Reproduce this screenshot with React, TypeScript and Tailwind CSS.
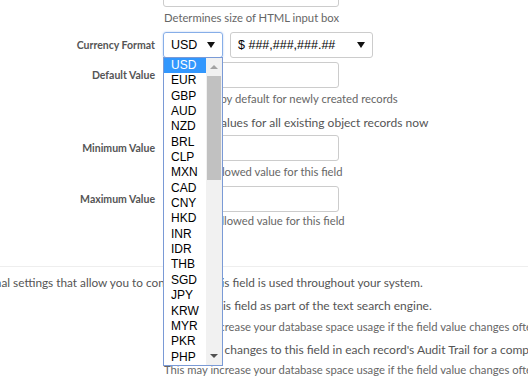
import React from 'react';

const currencies = [
  'USD', 'EUR', 'GBP', 'AUD', 'NZD', 'BRL', 'CLP', 'MXN', 'CAD', 'CNY',
  'HKD', 'INR', 'IDR', 'THB', 'SGD', 'JPY', 'KRW', 'MYR', 'PKR', 'PHP',
];

function Caret() {
  return (
    <svg width="8" height="6" viewBox="0 0 8 6" aria-hidden="true">
      <path d="M0 0h8L4 6z" fill="#111" />
    </svg>
  );
}

function TextBox() {
  return <div className="w-[176px] h-[26px] border border-[#ccc] rounded-[3px] bg-white" />;
}

function Label({ children }: { children: React.ReactNode }) {
  return (
    <div className="w-[155px] shrink-0 text-right text-[10.5px] font-bold text-[#555] leading-4">
      {children}
    </div>
  );
}

function Hint({ children, className = '' }: { children: React.ReactNode; className?: string }) {
  return <div className={`pl-[164px] text-[11.25px] leading-4 text-[#666] whitespace-nowrap ${className}`}>{children}</div>;
}

function CheckLine({
  children,
  className = '',
  gap = 'gap-[5px]',
}: {
  children: React.ReactNode;
  className?: string;
  gap?: string;
}) {
  return (
    <div className={`pl-[164px] flex items-center ${gap} text-[12px] leading-4 text-[#555] whitespace-nowrap ${className}`}>
      <span className="w-[13px] h-[13px] border border-[#999] rounded-[2px] bg-white shrink-0" />
      {children}
    </div>
  );
}

function CurrencyList() {
  return (
    <div className="absolute left-[163px] top-[57px] w-[60px] h-[309px] border border-[#7a9ad6] bg-white flex font-['Liberation_Sans',Arial,sans-serif] text-[12px] text-black">
      <ul className="flex-1 flex flex-col">
        {currencies.map((c, i) => (
          <li
            key={c}
            className={`h-[15.35px] leading-[15.35px] pl-[7px] ${i === 0 ? 'bg-[#3297fd] text-white' : ''}`}
          >
            {c}
          </li>
        ))}
      </ul>
      <div className="w-[16px] bg-[#f1f1f1] flex flex-col items-center">
        <div className="h-[18px] flex items-center justify-center">
          <svg width="8" height="4" viewBox="0 0 8 4"><path d="M0 4h8L4 0z" fill="#a3a3a3" /></svg>
        </div>
        <div className="w-[14px] h-[104px] bg-[#c1c1c1]" />
        <div className="flex-1" />
        <div className="h-[18px] flex items-center justify-center">
          <svg width="8" height="4" viewBox="0 0 8 4"><path d="M0 0h8L4 4z" fill="#505050" /></svg>
        </div>
      </div>
    </div>
  );
}

export default function App() {
  return (
    <div className="relative w-[528px] h-[382px] overflow-hidden bg-white font-['Lato','Liberation_Sans',sans-serif]">
      <div className="pl-[163px] mt-[-19px]">
        <TextBox />
      </div>
      <Hint className="mt-[3px]">Determines size of HTML input box</Hint>

      <div className="flex items-center gap-2 mt-[6px]">
        <Label>Currency Format</Label>
        <div className="flex gap-[7px]">
          <div className="w-[60px] h-[26px] border border-[#86aee8] rounded-[3px] shadow-[0_0_2px_rgba(102,150,230,0.5)] flex items-center justify-between pl-[7px] pr-[7px] font-['Liberation_Sans',Arial,sans-serif] text-[12.5px] text-black">
            USD
            <Caret />
          </div>
          <div className="w-[143px] h-[26px] border border-[#ccc] rounded-[3px] flex items-center justify-between pl-[7px] pr-[7px] font-['Liberation_Sans',Arial,sans-serif] text-[12.5px] text-black">
            $ ###,###,###.##
            <Caret />
          </div>
        </div>
      </div>

      <div className="flex items-center gap-2 mt-[4px]">
        <Label>Default Value</Label>
        <TextBox />
      </div>
      <Hint className="mt-[3px]">Value used by default for newly created records</Hint>
      <CheckLine className="mt-[8px]">Apply values for all existing object records now</CheckLine>

      <div className="flex items-center gap-2 mt-[4px]">
        <Label>Minimum Value</Label>
        <TextBox />
      </div>
      <Hint className="mt-[3px]">Minimum allowed value for this field</Hint>

      <div className="flex items-center gap-2 mt-[6px]">
        <Label>Maximum Value</Label>
        <TextBox />
      </div>
      <Hint className="mt-[1px]">Maximum allowed value for this field</Hint>

      <div className="mt-[37px] border-t border-[#eee]" />
      <div className="ml-[-43px] mt-[8px] text-[11.8px] leading-4 text-[#555] whitespace-nowrap">
        Additional settings that allow you to control how this field is used throughout your system.
      </div>
      <CheckLine className="mt-[7px]" gap="gap-[3px]">Index this field as part of the text search engine.</CheckLine>
      <Hint className="mt-[5px]">This may increase your database space usage if the field value changes often.</Hint>
      <CheckLine className="mt-[7px]" gap="gap-[2px]">Track all changes to this field in each record's Audit Trail for a complete history.</CheckLine>
      <Hint className="mt-[4px]">This may increase your database space usage if the field value changes often.</Hint>

      <CurrencyList />
    </div>
  );
}
